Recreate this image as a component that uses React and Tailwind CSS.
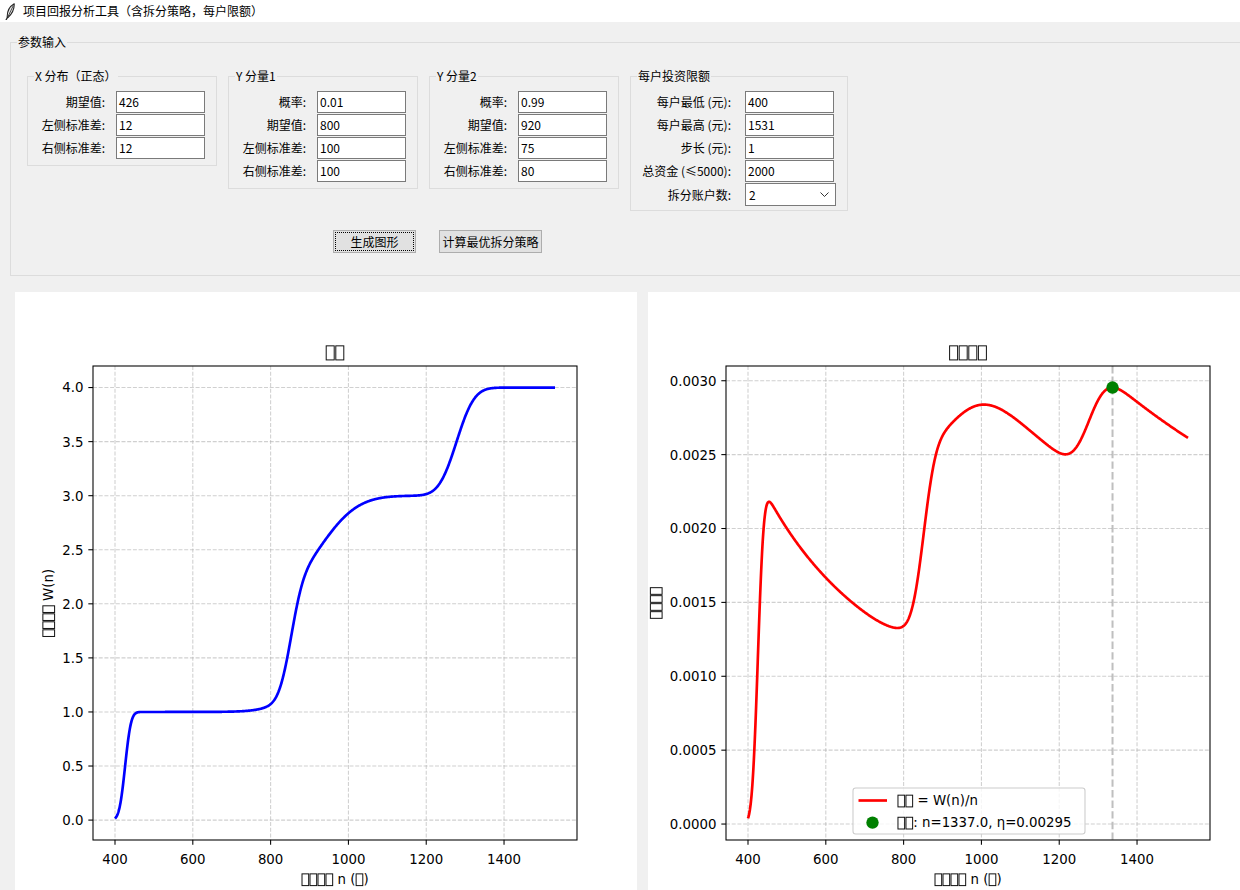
import React from 'react';

function erf(x) {
  const s = x < 0 ? -1 : 1;
  x = Math.abs(x);
  const t = 1 / (1 + 0.3275911 * x);
  const y = 1 - ((((1.061405429 * t - 1.453152027) * t + 1.421413741) * t - 0.284496736) * t + 0.254829592) * t * Math.exp(-x * x);
  return s * y;
}
const Phi = (z) => 0.5 * (1 + erf(z / Math.SQRT2));
function splitCdf(x, mu, sl, sr) {
  if (x < mu) return ((2 * sl) / (sl + sr)) * Phi((x - mu) / sl);
  return sl / (sl + sr) + ((2 * sr) / (sl + sr)) * (Phi((x - mu) / sr) - 0.5);
}
function W(n) {
  let w = 0;
  for (let k = 1; k <= 4; k++) w += splitCdf(n / k, 426, 12, 12);
  w += 0.01 * splitCdf(n, 800, 100, 100) + 0.99 * splitCdf(n, 920, 75, 80);
  return w;
}
const NS = [];
for (let n = 400; n <= 1531; n += 1) NS.push(n);
const WS = NS.map(W);
const ES = NS.map((n, i) => WS[i] / n);

const TOFU = '□';
const CW = { ' ': 0.318, n: 0.634, '(': 0.39, ')': 0.39, W: 0.989, '=': 0.838, '/': 0.337, ':': 0.337, '.': 0.318, ',': 0.318, 'η': 0.634 };
const cw = (c) => (c >= '0' && c <= '9' ? 0.636 : CW[c] ?? 0.6);

function MplText({ x, y, fs, str, anchor = 'start', rotate = false }) {
  const chars = [...str];
  const total = chars.reduce((a, c) => a + (c === TOFU ? 0.6 : cw(c)), 0) * fs;
  const start = anchor === 'middle' ? -total / 2 : anchor === 'end' ? -total : 0;
  const parts = [];
  let cur = start;
  let run = '';
  let runX = start;
  chars.forEach((c, i) => {
    if (c === TOFU) {
      if (run) {
        parts.push(
          <text key={'t' + i} x={runX} y={0} fontSize={fs} style={{ whiteSpace: 'pre' }}>
            {run}
          </text>
        );
        run = '';
      }
      parts.push(
        <rect key={'r' + i} x={cur + 0.05 * fs} y={-0.76 * fs} width={0.5 * fs} height={0.88 * fs} fill="none" stroke="#111" strokeWidth={1} />
      );
      cur += 0.6 * fs;
    } else {
      if (!run) runX = cur;
      run += c;
      cur += cw(c) * fs;
    }
  });
  if (run)
    parts.push(
      <text key="end" x={runX} y={0} fontSize={fs} style={{ whiteSpace: 'pre' }}>
        {run}
      </text>
    );
  return (
    <g transform={`translate(${x},${y})${rotate ? ' rotate(-90)' : ''}`} fill="#000" fontFamily="'DejaVu Sans', sans-serif">
      {parts}
    </g>
  );
}

function Chart({ ys, color, yTicks, yFmt, title, ylabel, ylabelX, extra }) {
  const L = 78, R = 562, T = 74, B = 548;
  const x0 = 400, x1 = 1531, xr = x1 - x0;
  const xmin = x0 - 0.05 * xr, xmax = x1 + 0.05 * xr;
  let ymn = Infinity, ymx = -Infinity;
  ys.forEach((v) => { if (v < ymn) ymn = v; if (v > ymx) ymx = v; });
  const yr = ymx - ymn;
  const ymin = ymn - 0.05 * yr, ymax = ymx + 0.05 * yr;
  const sx = (v) => L + ((v - xmin) / (xmax - xmin)) * (R - L);
  const sy = (v) => B - ((v - ymin) / (ymax - ymin)) * (B - T);
  const d = NS.map((n, i) => `${i ? 'L' : 'M'}${sx(n).toFixed(2)} ${sy(ys[i]).toFixed(2)}`).join('');
  const xTicks = [400, 600, 800, 1000, 1200, 1400];
  const fs = 13.33;
  return (
    <svg width="622" height="598" viewBox="0 0 622 598" className="block">
      <rect x="0" y="0" width="622" height="598" fill="#fff" />
      {xTicks.map((t) => (
        <line key={'gx' + t} x1={sx(t)} x2={sx(t)} y1={T} y2={B} stroke="#b0b0b0" strokeOpacity="0.6" strokeWidth="1.07" strokeDasharray="4 1.7" />
      ))}
      {yTicks.map((t) => (
        <line key={'gy' + t} x1={L} x2={R} y1={sy(t)} y2={sy(t)} stroke="#b0b0b0" strokeOpacity="0.6" strokeWidth="1.07" strokeDasharray="4 1.7" />
      ))}
      {extra && extra.under && extra.under({ sx, sy, T, B })}
      <path d={d} fill="none" stroke={color} strokeWidth="2.67" strokeLinejoin="round" strokeLinecap="butt" />
      {extra && extra.over && extra.over({ sx, sy, T, B })}
      <rect x={L} y={T} width={R - L} height={B - T} fill="none" stroke="#000" strokeWidth="1.07" />
      {xTicks.map((t) => (
        <g key={'tx' + t}>
          <line x1={sx(t)} x2={sx(t)} y1={B} y2={B + 4.67} stroke="#000" strokeWidth="1.07" />
          <text x={sx(t)} y={571.5} fontSize={fs} textAnchor="middle" fontFamily="'DejaVu Sans', sans-serif" fill="#000">
            {t}
          </text>
        </g>
      ))}
      {yTicks.map((t) => (
        <g key={'ty' + t}>
          <line x1={L - 4.67} x2={L} y1={sy(t)} y2={sy(t)} stroke="#000" strokeWidth="1.07" />
          <text x={68.5} y={sy(t) + 4.9} fontSize={fs} textAnchor="end" fontFamily="'DejaVu Sans', sans-serif" fill="#000">
            {yFmt(t)}
          </text>
        </g>
      ))}
      <MplText x={(L + R) / 2} y={66} fs={16} str={title} anchor="middle" />
      <MplText x={(L + R) / 2} y={592} fs={fs} str={'□□□□ n (□)'} anchor="middle" />
      <MplText x={ylabelX} y={(T + B) / 2} fs={fs} str={ylabel} anchor="middle" rotate />
      {extra && extra.legend}
    </svg>
  );
}

function Feather() {
  return (
    <svg width="10" height="17" viewBox="0 0 10 17" className="shrink-0">
      <path d="M2.2 14.5 C2 9 4.6 3.5 9.2 0.8 C9.4 5.8 7 11 2.9 14.6 Z" fill="#e8e8e8" stroke="#222" strokeWidth="1.1" strokeLinejoin="round" />
      <path d="M8.2 2.8 L3 13.6" stroke="#222" strokeWidth="0.8" />
      <path d="M2.6 14.2 L1.2 16.6" stroke="#222" strokeWidth="1.2" strokeLinecap="round" />
    </svg>
  );
}

function Entry({ value }) {
  return (
    <div className="h-[22px] w-[89px] border border-[#7a7a7a] bg-white pl-[2px] flex items-center leading-none">{value}</div>
  );
}

function Group({ title, rows, labelW, gap, pr, pl = 13, pb = 5, combo }) {
  return (
    <fieldset className="border border-[#dcdcdc] m-0 p-0 min-w-0">
      <legend className="ml-[6px] px-[1px] leading-[16px] whitespace-nowrap">{title}</legend>
      <div className="pt-[7px] flex flex-col gap-[1px]">
        {rows.map(([label, value], i) => {
          const isCombo = combo && i === rows.length - 1;
          return (
            <div key={label} className="flex items-center">
              <div className="shrink-0 flex justify-end whitespace-nowrap" style={{ width: labelW + pl, paddingLeft: pl }}>
                {label}
              </div>
              <div className="shrink-0" style={{ marginLeft: gap }}>
                {isCombo ? (
                  <div className="h-[23px] w-[91px] -mr-[2px] border border-[#7a7a7a] bg-white pl-[3px] flex items-center justify-between pr-[6px] leading-none">
                    <span>{value}</span>
                    <svg width="9" height="5" viewBox="0 0 9 5">
                      <polyline points="0.5,0.5 4.5,4.5 8.5,0.5" fill="none" stroke="#333" strokeWidth="1" />
                    </svg>
                  </div>
                ) : (
                  <Entry value={value} />
                )}
              </div>
              <div className="shrink-0" style={{ width: pr }} />
            </div>
          );
        })}
      </div>
      <div style={{ height: pb }} />
    </fieldset>
  );
}

export default function App() {
  const legend = (
    <g>
      <rect x="205" y="496" width="232" height="46" rx="2.7" fill="#fff" fillOpacity="0.8" stroke="#cccccc" strokeWidth="1.07" />
      <line x1="210.5" x2="239" y1="508.5" y2="508.5" stroke="#ff0000" strokeWidth="2.67" />
      <MplText x={249.3} y={513.3} fs={13.33} str={'□□ = W(n)/n'} />
      <circle cx="224.5" cy="530.6" r="6.2" fill="#008000" />
      <MplText x={249.3} y={535.4} fs={13.33} str={'□□: n=1337.0, η=0.00295'} />
    </g>
  );
  const eOpt = W(1337) / 1337;
  return (
    <div className="w-[1240px] h-[890px] overflow-hidden bg-[#f0f0f0] text-[12px] text-black font-['Noto_Sans_CJK_SC','Noto_Sans',sans-serif]">
      <div className="h-[22px] bg-white flex items-center pl-[5px] gap-[8px] leading-none">
        <Feather />
        <span>项目回报分析工具（含拆分策略，每户限额）</span>
      </div>
      <fieldset className="mt-[12px] ml-[10px] w-[1232px] border border-[#dcdcdc] m-0 p-0 min-w-0">
        <legend className="ml-[6px] px-[1px] leading-[16px]">参数输入</legend>
        <div className="pt-[18px] pl-[16px] pb-[22px]">
          <div className="inline-flex flex-col items-center">
            <div className="flex items-start gap-[11px]">
              <Group
                title="X 分布（正态）"
                labelW={64}
                gap={11}
                pr={11}
                pb={6}
                rows={[
                  ['期望值:', '426'],
                  ['左侧标准差:', '12'],
                  ['右侧标准差:', '12'],
                ]}
              />
              <Group
                title="Y 分量1"
                labelW={64}
                gap={11}
                pr={11}
                pb={6}
                rows={[
                  ['概率:', '0.01'],
                  ['期望值:', '800'],
                  ['左侧标准差:', '100'],
                  ['右侧标准差:', '100'],
                ]}
              />
              <Group
                title="Y 分量2"
                labelW={64}
                gap={11}
                pr={11}
                pb={6}
                rows={[
                  ['概率:', '0.99'],
                  ['期望值:', '920'],
                  ['左侧标准差:', '75'],
                  ['右侧标准差:', '80'],
                ]}
              />
              <Group
                title="每户投资限额"
                labelW={87}
                gap={14}
                pr={13}
                pb={4}
                combo
                rows={[
                  ['每户最低 (元):', '400'],
                  ['每户最高 (元):', '1531'],
                  ['步长 (元):', '1'],
                  ['总资金 (≤5000):', '2000'],
                  ['拆分账户数:', '2'],
                ]}
              />
            </div>
            <div className="mt-[19px] flex gap-[23px]">
              <button className="relative h-[23px] w-[83px] border border-[#adadad] bg-[#e1e1e1] flex items-center justify-center leading-none">
                <span className="absolute inset-[1px] border border-dotted border-black" />
                生成图形
              </button>
              <button className="h-[23px] w-[103px] border border-[#adadad] bg-[#e1e1e1] flex items-center justify-center leading-none">
                计算最优拆分策略
              </button>
            </div>
          </div>
        </div>
      </fieldset>
      <div className="mt-[16px] pl-[15px] flex gap-[11px]">
        <div className="w-[622px] h-[598px] shrink-0 bg-white">
          <Chart ys={WS} color="#0000ff" yTicks={[0, 0.5, 1, 1.5, 2, 2.5, 3, 3.5, 4]} yFmt={(t) => t.toFixed(1)} title="□□" ylabel="□□□□ W(n)" ylabelX={38} />
        </div>
        <div className="w-[622px] h-[598px] shrink-0 bg-white">
          <Chart
            ys={ES}
            color="#ff0000"
            yTicks={[0, 0.0005, 0.001, 0.0015, 0.002, 0.0025, 0.003]}
            yFmt={(t) => t.toFixed(4)}
            title="□□□□"
            ylabel="□□□□"
            ylabelX={12.5}
            extra={{
              under: ({ sx, T, B }) => (
                <line x1={sx(1337)} x2={sx(1337)} y1={T} y2={B} stroke="#808080" strokeOpacity="0.5" strokeWidth="2" strokeDasharray="7.4 3.2" />
              ),
              over: ({ sx, sy }) => <circle cx={sx(1337)} cy={sy(eOpt)} r="6.2" fill="#008000" />,
              legend,
            }}
          />
        </div>
      </div>
    </div>
  );
}
